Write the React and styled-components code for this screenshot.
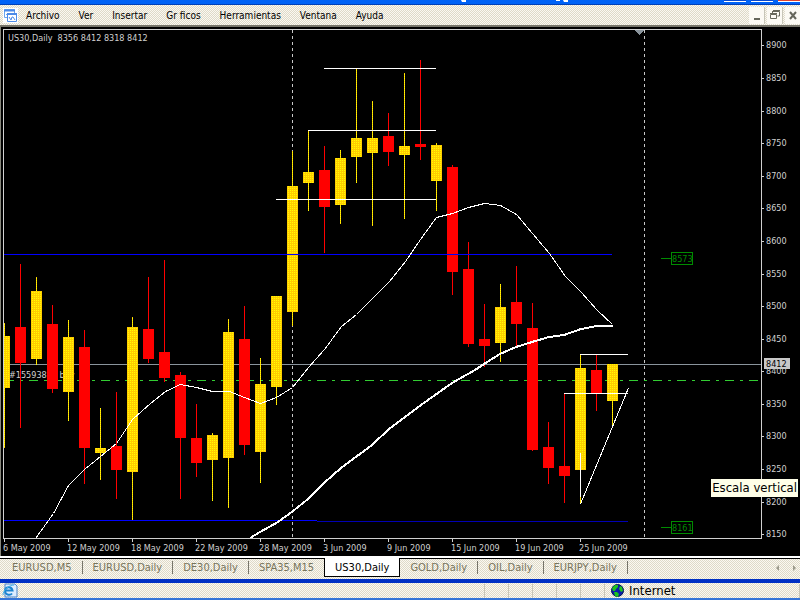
import React from "react";
import styled, { createGlobalStyle } from "styled-components";

// x is the centre of the candle: [x, rising, high, top, bottom, low]
const candles = [
  [4, 1, 323, 336, 388, 448],
  [20, 0, 264, 327, 363, 428],
  [36, 1, 277, 291, 359, 365],
  [52, 0, 305, 324, 389, 393],
  [68, 1, 320, 337, 392, 421],
  [84, 0, 330, 347, 448, 484],
  [100, 1, 408, 448, 453, 480],
  [116, 0, 392, 446, 470, 499],
  [132, 1, 317, 327, 472, 520],
  [148, 0, 277, 329, 359, 363],
  [164, 0, 260, 352, 378, 382],
  [180, 0, 372, 375, 438, 499],
  [196, 0, 404, 438, 463, 477],
  [212, 1, 433, 435, 460, 501],
  [228, 1, 319, 332, 458, 508],
  [244, 0, 306, 339, 445, 455],
  [260, 1, 358, 384, 452, 483],
  [276, 1, 296, 296, 387, 405],
  [292, 1, 151, 186, 312, 326],
  [308, 1, 130, 172, 183, 211],
  [324, 0, 146, 170, 207, 253],
  [340, 1, 150, 158, 205, 224],
  [356, 1, 68, 138, 157, 183],
  [372, 1, 101, 138, 153, 226],
  [388, 0, 113, 136, 152, 166],
  [404, 1, 73, 146, 155, 219],
  [420, 0, 60, 144, 147, 160],
  [436, 1, 143, 145, 181, 211],
  [452, 0, 165, 167, 272, 295],
  [468, 0, 242, 269, 344, 347],
  [484, 0, 304, 339, 346, 367],
  [500, 1, 284, 307, 343, 362],
  [516, 0, 266, 302, 324, 347],
  [532, 0, 303, 328, 450, 451],
  [548, 0, 422, 447, 468, 484],
  [564, 0, 393, 466, 476, 503],
  [580, 1, 354, 368, 470, 504],
  [596, 0, 355, 370, 393, 411],
  [612, 1, 364, 364, 401, 426],
];

const fastAverage =
  "35,538 53,513 68,485 84,469 100,456 116,443 132,419 150,403 165,391 180,384 196,387 212,391 229,391 244,397 260,403 276,397 292,387 308,367 324,349 341,326 356,314 380,290 389,281 405,261 420,239 436,217 452,213 468,207 484,203 500,205 516,214 532,233 549,253 565,276 581,292 597,310 612,324";
const slowAverage =
  "250,538 260,532 278,522 293,511 308,499 324,483 341,468 372,445 389,429 421,405 452,383 475,370 484,364 500,354 516,347 532,342 549,337 564,335 581,329 597,326 613,326";

const prices = [
  [8900, 45], [8850, 78], [8800, 111], [8750, 143],
  [8700, 176], [8650, 208], [8600, 241], [8550, 274],
  [8500, 306], [8450, 339], [8400, 371], [8350, 404],
  [8300, 436], [8250, 469], [8200, 502], [8150, 534],
];

const dates = [
  "6 May 2009", "12 May 2009", "18 May 2009", "22 May 2009", "28 May 2009",
  "3 Jun 2009", "9 Jun 2009", "15 Jun 2009", "19 Jun 2009", "25 Jun 2009",
];

// [x1, x2, y]
const levels = [
  [324, 436, 68],
  [308, 436, 130],
  [276, 436, 199],
  [580, 628, 354],
  [564, 628, 393],
];

const menus = ["Archivo", "Ver", "Insertar", "Gr ficos", "Herramientas", "Ventana", "Ayuda"];

const tabs = [
  "EURUSD,M5", "EURUSD,Daily", "DE30,Daily", "SPA35,M15",
  "US30,Daily", "GOLD,Daily", "OIL,Daily", "EURJPY,Daily",
];

function Candle({ x, rising, high, top, bottom, low }) {
  const fill = rising ? "url(#gold)" : "#ff0000";
  return (
    <g fill={fill}>
      <rect x={x} y={high} width="1" height={low - high} />
      <rect x={x - 5} y={top} width="11" height={bottom - top} />
    </g>
  );
}

function PriceTag({ y, value }) {
  return (
    <g>
      <path d={`M661 ${y}.5H671M671.5 ${y - 6}.5h21v12h-21z`} fill="none" stroke="#008c00" />
      <ChartText x="672" y={y + 4} fill="#008c00">{value}</ChartText>
    </g>
  );
}

function Chart() {
  return (
    <ChartArea>
      <Plot viewBox="0 27 800 529" role="img" aria-label="US30,Daily">
        <defs>
          <pattern id="gold" width="2" height="2" patternUnits="userSpaceOnUse">
            <rect width="2" height="2" fill="#ffcc00" />
            <rect width="1" height="1" fill="#ffff00" />
          </pattern>
          <clipPath id="plot">
            <rect x="4" y="30" width="757" height="508" />
          </clipPath>
        </defs>
        <rect y="27" width="1" height="529" fill="#85857a" />

        <g clipPath="url(#plot)">
          <path d="M292.5 30V538M644.5 30V538" stroke="#c8c8c8" strokeDasharray="3 3" />
          <path d="M4 364.5H761" stroke="#8a949c" />
          <path d="M5 380.5H761" stroke="#32cd32" strokeDasharray="9 6 3 6" />
          <ChartText x="9" y="378">#15593880 buy</ChartText>
          {candles.map(([x, rising, high, top, bottom, low]) => (
            <Candle key={x} x={x} rising={rising} high={high} top={top} bottom={bottom} low={low} />
          ))}
          <path d="M4 254.5H612M4 520.5H317" stroke="#0000ff" />
          <path d="M317 521.5H628" stroke="#0000b4" />
          {levels.map(([x1, x2, y]) => (
            <rect key={y} x={x1} y={y} width={x2 - x1} height="1" fill="#fff" />
          ))}
          <path d="M580.5 453V497M580.5 504L628.5 388" stroke="#fff" />
          <FastLine points={fastAverage} />
          <SlowLine points={slowAverage} />
          <path d="M634 30H644L639 35z" fill="#8a949c" />
        </g>

        <path d="M3.5 538.5V29.5H761.5V538.5z" fill="none" stroke="#d0d0d0" />
        <ChartText x="8" y="41">US30,Daily&#160; 8356 8412 8318 8412</ChartText>
        {prices.map(([value, y]) => (
          <g key={value}>
            <rect x="762" y={y} width="2" height="1" fill="#d0d0d0" />
            <ChartText x="766" y={y + 3}>{value}</ChartText>
          </g>
        ))}
        {dates.map((date, i) => (
          <g key={date}>
            <rect x={4 + i * 64} y="539" width="1" height="3" fill="#d0d0d0" />
            <ChartText x={3 + i * 64} y="551">{date}</ChartText>
          </g>
        ))}
        <rect x="764" y="358" width="26" height="11" fill="#c8c8c8" />
        <ChartText x="766" y="367" fill="#000">8412</ChartText>
        <PriceTag y={258} value="8573" />
        <PriceTag y={527} value="8161" />
      </Plot>
      <Tooltip role="tooltip">Escala vertical</Tooltip>
    </ChartArea>
  );
}

function App() {
  return (
    <Window>
      <GlobalStyle />
      <TitleBar>
        <svg width="108" height="2" aria-hidden="true">
          <path d="M0 0h5v2h-4zM95 0h4v1h-4zM102 0h5v2h-4z" fill="#fff" />
        </svg>
        <Captions>
          <Caption />
          <Caption />
          <Caption $close />
        </Captions>
      </TitleBar>

      <MenuBar>
        <AppIcon viewBox="0 0 15 15" aria-hidden="true">
          <path d="M0 0h15v15H0z" fill="#fff" />
          <path d="M1.500 1.500h10v8h-10z" fill="#fff" stroke="#6aa5ee" />
          <path d="M1 2.500h11" stroke="#4c8be8" strokeWidth="2" />
          <path d="M3 7l2-2 1 2" fill="none" stroke="#6aa5ee" />
          <path d="M4.500 5.500h9v8h-9z" fill="#fff" stroke="#4c8be8" />
          <path d="M4 6h10" stroke="#4c8be8" strokeWidth="2" />
          <path d="M6 9l2 3 1-3 1 0 2 3" fill="none" stroke="#4c8be8" />
        </AppIcon>
        {menus.map((menu) => (
          <MenuButton key={menu}>{menu}</MenuButton>
        ))}
        <WindowButtons>
          <WindowButton aria-label="Minimizar">
            <svg width="12" height="12"><path d="M3 10h6" stroke="#66665a" strokeWidth="2" /></svg>
          </WindowButton>
          <WindowButton aria-label="Restaurar">
            <svg width="12" height="12" fill="none" stroke="#66665a">
              <path d="M4 2.500h6.500V7M4 1.500h7M3.500 2v2M10.500 7h-2M1.500 5.500h6v4h-6zM1 4.500h7" />
            </svg>
          </WindowButton>
          <WindowButton aria-label="Cerrar">
            <svg width="12" height="12"><path d="M3 3l6 7M9 3l-6 7" stroke="#66665a" strokeWidth="2" /></svg>
          </WindowButton>
        </WindowButtons>
      </MenuBar>

      <Chart />

      <TabBar>
        {tabs.map((tab) => (
          <Tab key={tab} $active={tab === "US30,Daily"} $beforeActive={tab === "SPA35,M15"}>
            {tab}
          </Tab>
        ))}
        <Scroller>
          <ScrollButton aria-label="Anterior">
            <svg width="6" height="6"><path d="M4 0v6L1 3z" fill="#9c9a8c" /></svg>
          </ScrollButton>
          <ScrollButton aria-label="Siguiente">
            <svg width="6" height="6"><path d="M2 0v6l3-3z" fill="#9c9a8c" /></svg>
          </ScrollButton>
        </Scroller>
      </TabBar>

      <StatusBar>
        <svg width="16" height="15" viewBox="0 0 16 15" aria-hidden="true">
          <path d="M3 1h10l2 2v11H3z" fill="#dcecff" stroke="#4a84c8" />
          <path d="M10 10.500C8.500 12.500 3.500 12.500 3 8C3 3.500 9.500 2.500 10.500 7.500H4" fill="none" stroke="#1c84d0" strokeWidth="2" />
          <path d="M1 12C1 7 7 2 12 2" fill="none" stroke="#48b4e8" />
        </svg>
        <Panels>
          <Panel />
          <Panel />
          <Panel />
          <Panel />
          <Panel />
        </Panels>
        <Zone>
          <svg width="13" height="13" viewBox="0 0 13 13" aria-hidden="true">
            <circle cx="6.500" cy="6.500" r="6" fill="#0a1ea8" stroke="#001450" />
            <path d="M1 4l3-3 3 0 0 2-2 2-1 2-2 0zM9 2l2 1 1 4-2 1-2-3zM3 8l3 0 2 2-1 3-3-1z" fill="#1cc41c" />
          </svg>
          Internet
        </Zone>
      </StatusBar>
    </Window>
  );
}

const dither = "repeating-conic-gradient(#fbf8f2 0 25%, #dedac8 0 50%) 0 0 / 2px 2px";

const GlobalStyle = createGlobalStyle`
  body {
    margin: 0;
    background: #000;
    font-family: "DejaVu Sans Condensed", "DejaVu Sans", sans-serif;
  }
  button {
    border: 0;
    padding: 0;
    background: none;
    font: inherit;
    color: inherit;
  }
  svg {
    display: block;
    flex: none;
  }
`;

const Window = styled.div`
  display: flex;
  flex-direction: column;
  min-height: 100vh;
`;

const TitleBar = styled.div`
  display: flex;
  justify-content: flex-end;
  box-sizing: border-box;
  height: 5px;
  background: #0062f6;
  border-bottom: 1px solid #0040b8;
`;

const Captions = styled.div`
  display: flex;
  gap: 5px;
  margin-left: 155px;
`;

const Caption = styled.span`
  width: 22px;
  height: 1px;
  background: ${({ $close }) => ($close ? "#e0442c" : "#0848d0")};
  border-bottom: 1px solid #fff;
`;

const MenuBar = styled.nav`
  display: flex;
  align-items: center;
  box-sizing: border-box;
  height: 22px;
  padding-left: 3px;
  background: ${dither};
  border-bottom: 2px solid #77756a;
  font-size: 10px;
`;

const AppIcon = styled.svg`
  width: 15px;
  height: 15px;
`;

const MenuButton = styled.button`
  padding: 0 11px 0 8px;
  color: #000;
  white-space: nowrap;
`;

const WindowButtons = styled.div`
  display: flex;
  gap: 3px;
  margin-left: auto;
`;

const WindowButton = styled.button`
  display: grid;
  place-items: center;
  width: 15px;
  height: 17px;
  background: #fcfaf4;
  box-shadow: 1px 0 #c8c6b8;
`;

const ChartArea = styled.main`
  position: relative;
  flex: 1;
  background: #000;
`;

const Plot = styled.svg`
  width: 100%;
  shape-rendering: crispEdges;
`;

const FastLine = styled.polyline`
  fill: none;
  stroke: #fff;
  stroke-width: 1px;
  transform: translate(0.5px, 0.5px);
`;

const SlowLine = styled.polyline`
  fill: none;
  stroke: #fff;
  stroke-width: 2px;
`;

const ChartText = styled.text`
  font-size: 9px;
  fill: ${({ fill }) => fill || "#d0d0d0"};
`;

const Tooltip = styled.div`
  position: absolute;
  right: 2px;
  bottom: 59px;
  padding: 0 1px;
  line-height: 18px;
  background: #ffffe8;
  color: #000;
  font-size: 13px;
`;

const TabBar = styled.div`
  display: flex;
  align-items: flex-start;
  box-sizing: border-box;
  height: 23px;
  padding-left: 2px;
  background: ${dither};
  border-top: 2px solid #fff;
  box-shadow: inset 0 1px #000;
  font-size: 11px;
`;

const Tab = styled.button`
  box-sizing: border-box;
  height: ${({ $active }) => ($active ? "19px" : "13px")};
  margin-top: ${({ $active }) => ($active ? "0" : "3px")};
  padding: ${({ $active }) => ($active ? "1px 10px 0" : "0 10px")};
  line-height: ${({ $active }) => ($active ? "16px" : "13px")};
  white-space: nowrap;
  color: ${({ $active }) => ($active ? "#000" : "#77745c")};
  background: ${({ $active }) => ($active ? "#fff" : "none")};
  border: solid ${({ $active }) => ($active ? "#000" : "#77756a")};
  border-width: ${({ $active, $beforeActive }) => ($active ? "0 1px 1px" : $beforeActive ? "0" : "0 1px 0 0")};
`;

const Scroller = styled.div`
  display: flex;
  gap: 10px;
  margin: 7px 3px 0 auto;
`;

const ScrollButton = styled.button`
  width: 6px;
  height: 6px;
`;

const StatusBar = styled.footer`
  display: flex;
  align-items: center;
  box-sizing: border-box;
  height: 21px;
  padding-left: 2px;
  background: ${dither};
  border-top: 4px solid #0030c4;
  border-bottom: 2px solid #3474d8;
  font-size: 13px;
`;

const Panels = styled.div`
  display: flex;
  margin-left: auto;
`;

const Panel = styled.span`
  box-sizing: border-box;
  width: 24px;
  height: 14px;
  border-left: 1px solid #c8c6b8;
`;

const Zone = styled.div`
  display: flex;
  align-items: center;
  gap: 5px;
  box-sizing: border-box;
  width: 196px;
  padding-left: 6px;
  line-height: 14px;
  border-left: 1px solid #c8c6b8;
  border-right: 1px solid #c8c6b8;
`;

export default App;
